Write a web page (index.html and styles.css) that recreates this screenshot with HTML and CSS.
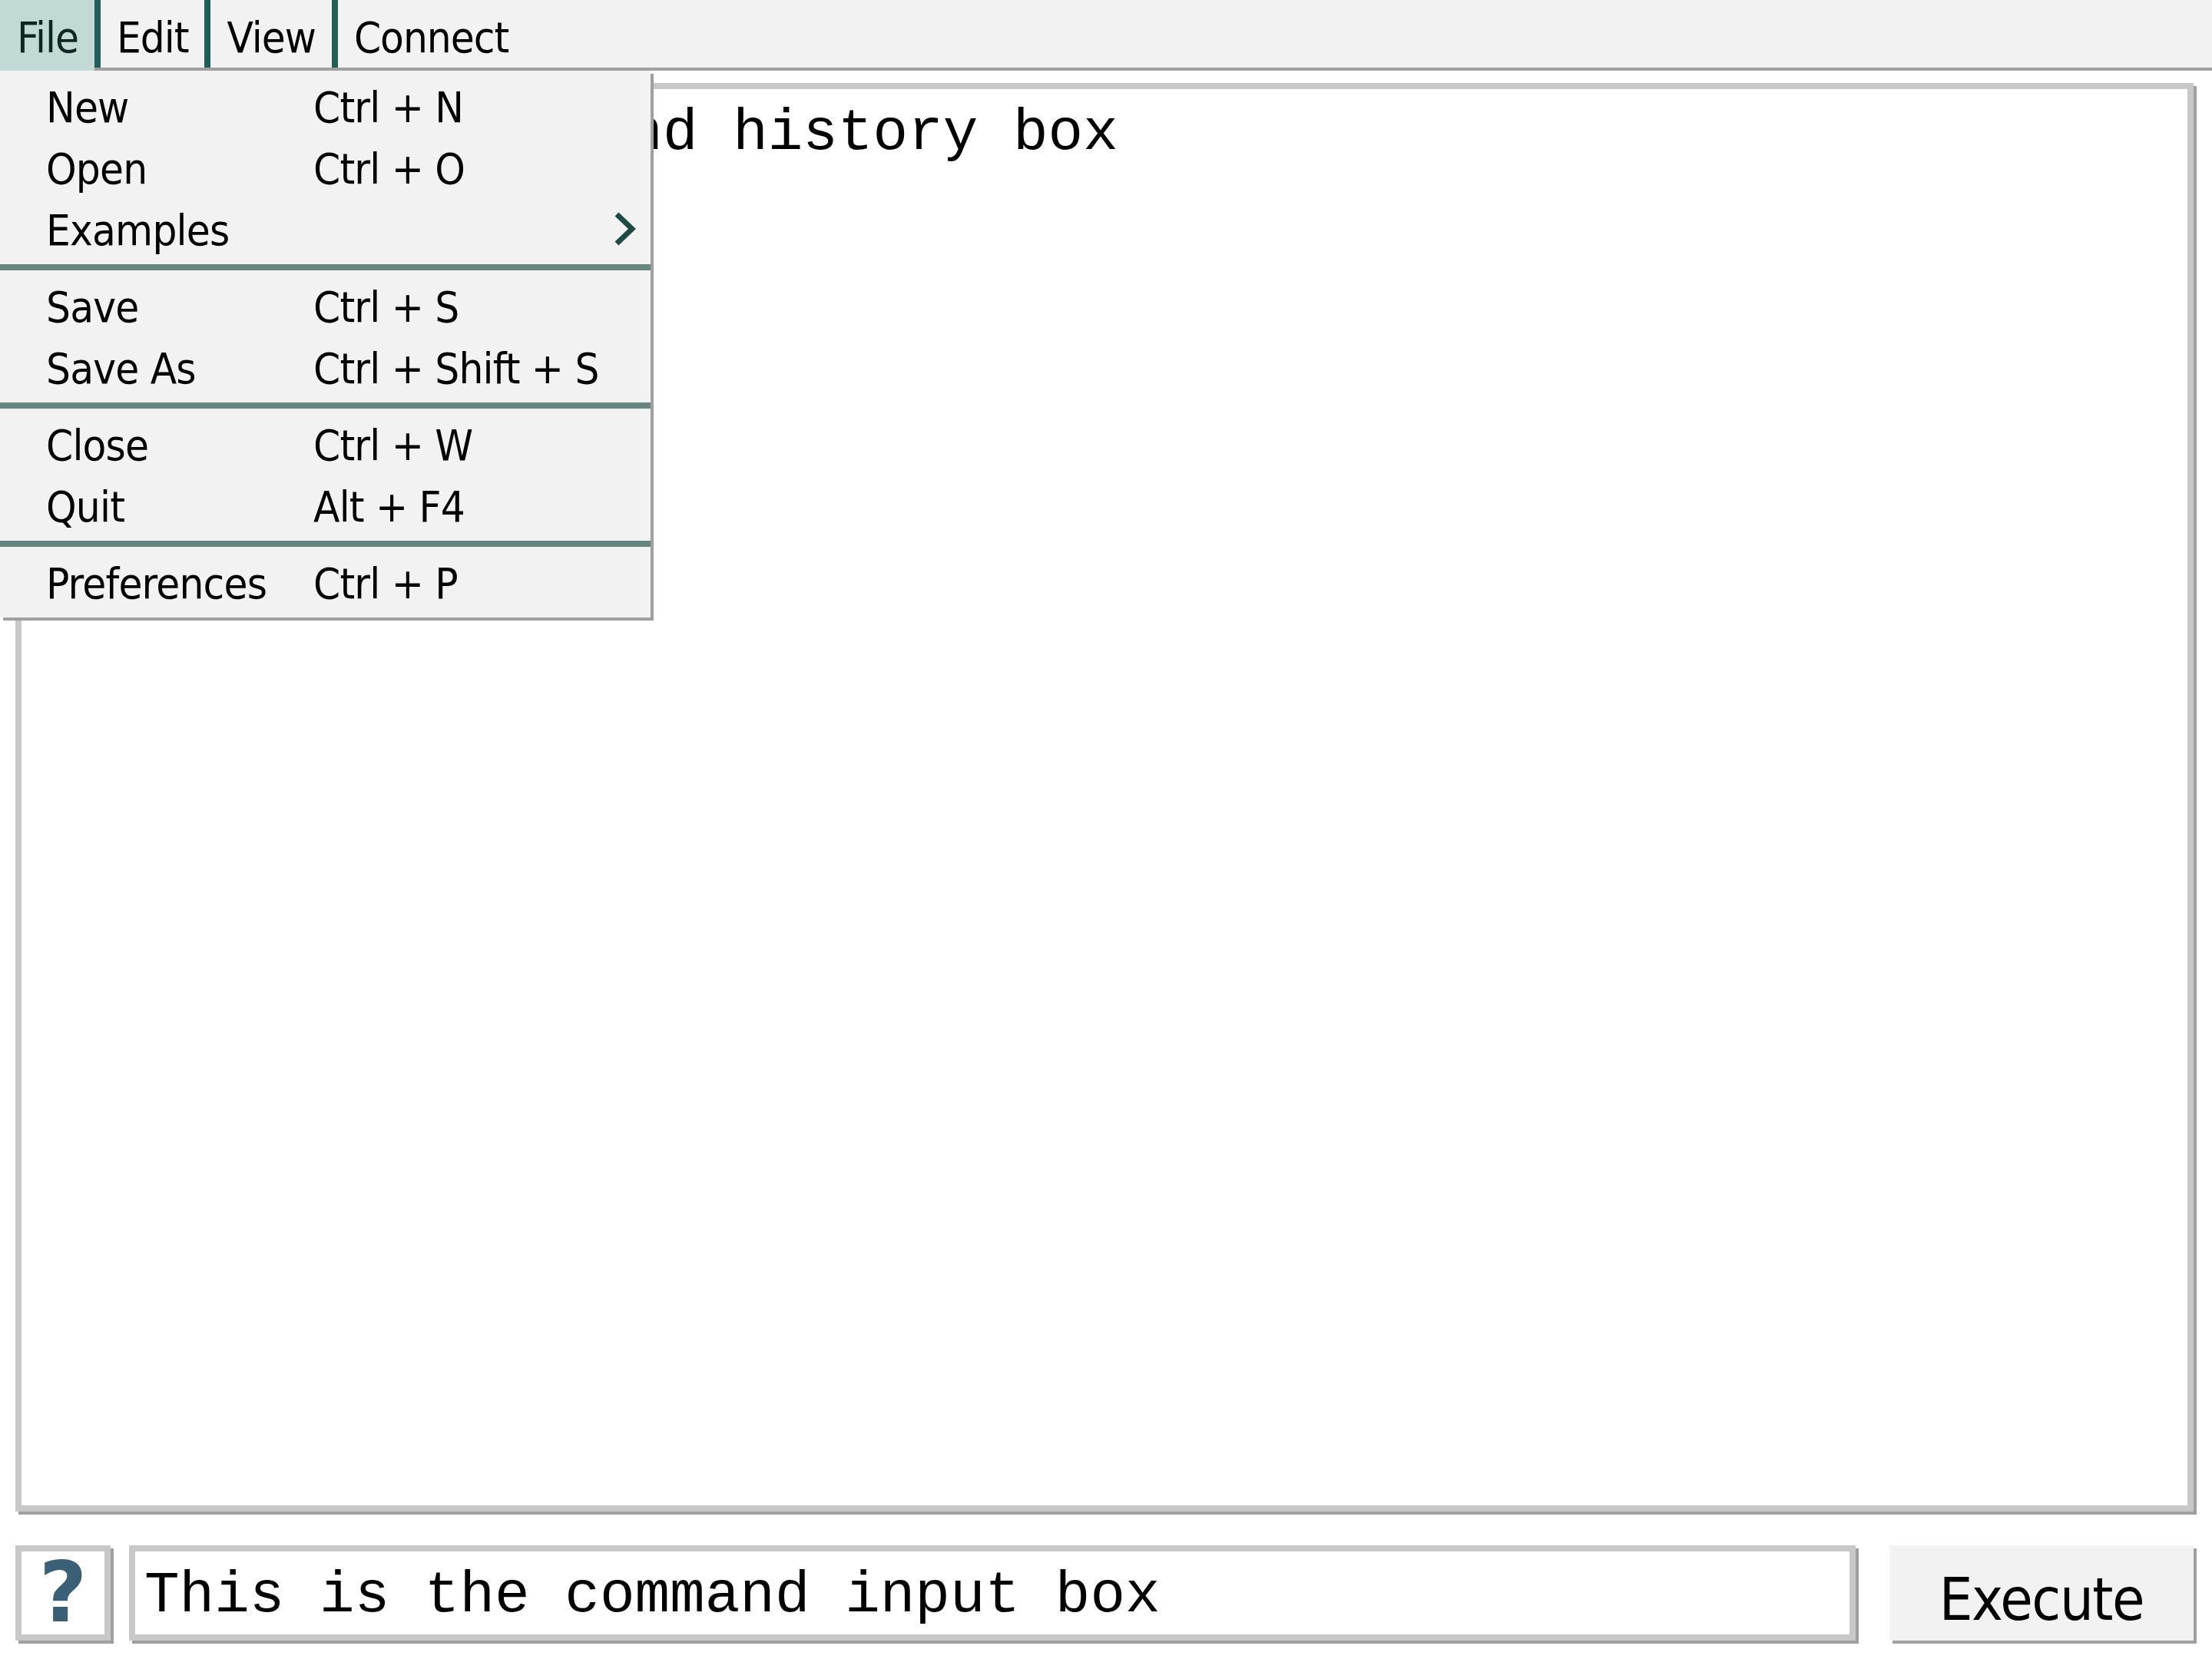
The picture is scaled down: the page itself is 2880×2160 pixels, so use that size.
FILE: index.html
```html
<!DOCTYPE html>
<html lang="en">
<head>
<meta charset="utf-8">
<title>Console</title>
<link rel="stylesheet" href="styles.css">
</head>
<body>
<div class="app">
  <nav class="menubar">
    <div class="menu-item active">File</div>
    <div class="menu-item">Edit</div>
    <div class="menu-item">View</div>
    <div class="menu-item">Connect</div>
    <div class="dropdown">
      <div class="menu-group">
        <div class="menu-entry"><span>New</span><span>Ctrl + N</span><span></span></div>
        <div class="menu-entry"><span>Open</span><span>Ctrl + O</span><span></span></div>
        <div class="menu-entry"><span>Examples</span><span></span><svg class="chevron" viewBox="0 0 30 46" width="30" height="46"><polyline points="5,4 25,23 5,42" fill="none" stroke="#1e4a43" stroke-width="7"/></svg></div>
      </div>
      <div class="menu-sep"></div>
      <div class="menu-group">
        <div class="menu-entry"><span>Save</span><span>Ctrl + S</span><span></span></div>
        <div class="menu-entry"><span>Save As</span><span>Ctrl + Shift + S</span><span></span></div>
      </div>
      <div class="menu-sep"></div>
      <div class="menu-group">
        <div class="menu-entry"><span>Close</span><span>Ctrl + W</span><span></span></div>
        <div class="menu-entry"><span>Quit</span><span>Alt + F4</span><span></span></div>
      </div>
      <div class="menu-sep"></div>
      <div class="menu-group">
        <div class="menu-entry"><span>Preferences</span><span>Ctrl + P</span><span></span></div>
      </div>
    </div>
  </nav>
  <main class="content">
    <div class="history">This is the command history box</div>
    <div class="command-row">
      <div class="help">?</div>
      <div class="command-input">This is the command input box</div>
      <button class="execute" type="button">Execute</button>
    </div>
  </main>
</div>
</body>
</html>
```

FILE: styles.css
```css
html, body {
  margin: 0;
  padding: 0;
  background: #ffffff;
}

.app {
  height: 2160px;
  display: flex;
  flex-direction: column;
  font-family: "Tahoma", "DejaVu Sans Condensed", "DejaVu Sans", sans-serif;
  font-stretch: condensed;
  color: #000000;
}

.menubar {
  position: relative;
  display: flex;
  align-items: flex-start;
  height: 92px;
  flex: 0 0 92px;
  background: #f2f2f2;
  box-shadow: inset 0 -4px 0 #a0a0a0;
  font-size: 56px;
  letter-spacing: -1px;
}

.menu-item {
  box-sizing: border-box;
  height: 88px;
  padding: 9px 21px 0 21px;
  line-height: 79px;
  border-left: 8px solid #215e55;
  white-space: nowrap;
}

.menu-item.active {
  border-left: none;
  height: 92px;
  padding-left: 22px;
  background: #c2dad6;
  color: #0f2622;
}

.dropdown {
  position: absolute;
  top: 92px;
  left: 0;
  width: 847px;
  background: #f2f2f2;
  box-shadow: 4px 4px 0 #a0a0a0;
  z-index: 10;
  letter-spacing: -0.8px;
}

.menu-group {
  padding-bottom: 12px;
}

.menu-sep {
  height: 8px;
  background: #688680;
}

.menu-entry {
  box-sizing: border-box;
  display: grid;
  grid-template-columns: 348px 1fr 30px;
  height: 80px;
  padding: 15px 19px 0 60px;
  line-height: 65px;
  white-space: nowrap;
}

.chevron {
  display: block;
  margin-top: 8px;
}

.content {
  flex: 1;
  display: flex;
  flex-direction: column;
  gap: 44px;
  padding: 16px 24px 24px 20px;
  min-height: 0;
}

.history {
  flex: 1;
  box-sizing: border-box;
  background: #ffffff;
  border: 8px solid #c8c8c8;
  box-shadow: 4px 4px 0 #a0a0a0;
  padding: 15px 14px;
  font-family: "Courier New", "Nimbus Mono PS", "Liberation Mono", monospace;
  font-size: 76px;
  white-space: pre;
  overflow: hidden;
}

.command-row {
  display: flex;
  height: 124px;
  flex: 0 0 124px;
  gap: 24px;
}

.help {
  box-sizing: border-box;
  width: 124px;
  height: 124px;
  border: 8px solid #c8c8c8;
  box-shadow: 4px 4px 0 #a0a0a0;
  background: #ffffff;
  display: flex;
  align-items: center;
  justify-content: center;
  font-family: "Tahoma", "DejaVu Sans", sans-serif;
  font-stretch: normal;
  font-weight: bold;
  font-size: 108px;
  color: #3b5f77;
  line-height: 1;
}

.command-input {
  flex: 1;
  box-sizing: border-box;
  height: 124px;
  border: 8px solid #c8c8c8;
  box-shadow: 4px 4px 0 #a0a0a0;
  background: #ffffff;
  padding: 8px 12px 0 12px;
  line-height: 100px;
  font-family: "Courier New", "Nimbus Mono PS", "Liberation Mono", monospace;
  font-size: 76px;
  white-space: pre;
  overflow: hidden;
}

.execute {
  box-sizing: border-box;
  width: 396px;
  height: 124px;
  margin-left: 20px;
  border: none;
  background: #f2f2f2;
  box-shadow: 4px 4px 0 #a0a0a0;
  padding: 16px 0 0 0;
  font-family: "Tahoma", "DejaVu Sans Condensed", "DejaVu Sans", sans-serif;
  font-stretch: condensed;
  font-size: 77px;
  letter-spacing: -1.5px;
  line-height: 107px;
  color: #000000;
  text-align: center;
}
```
